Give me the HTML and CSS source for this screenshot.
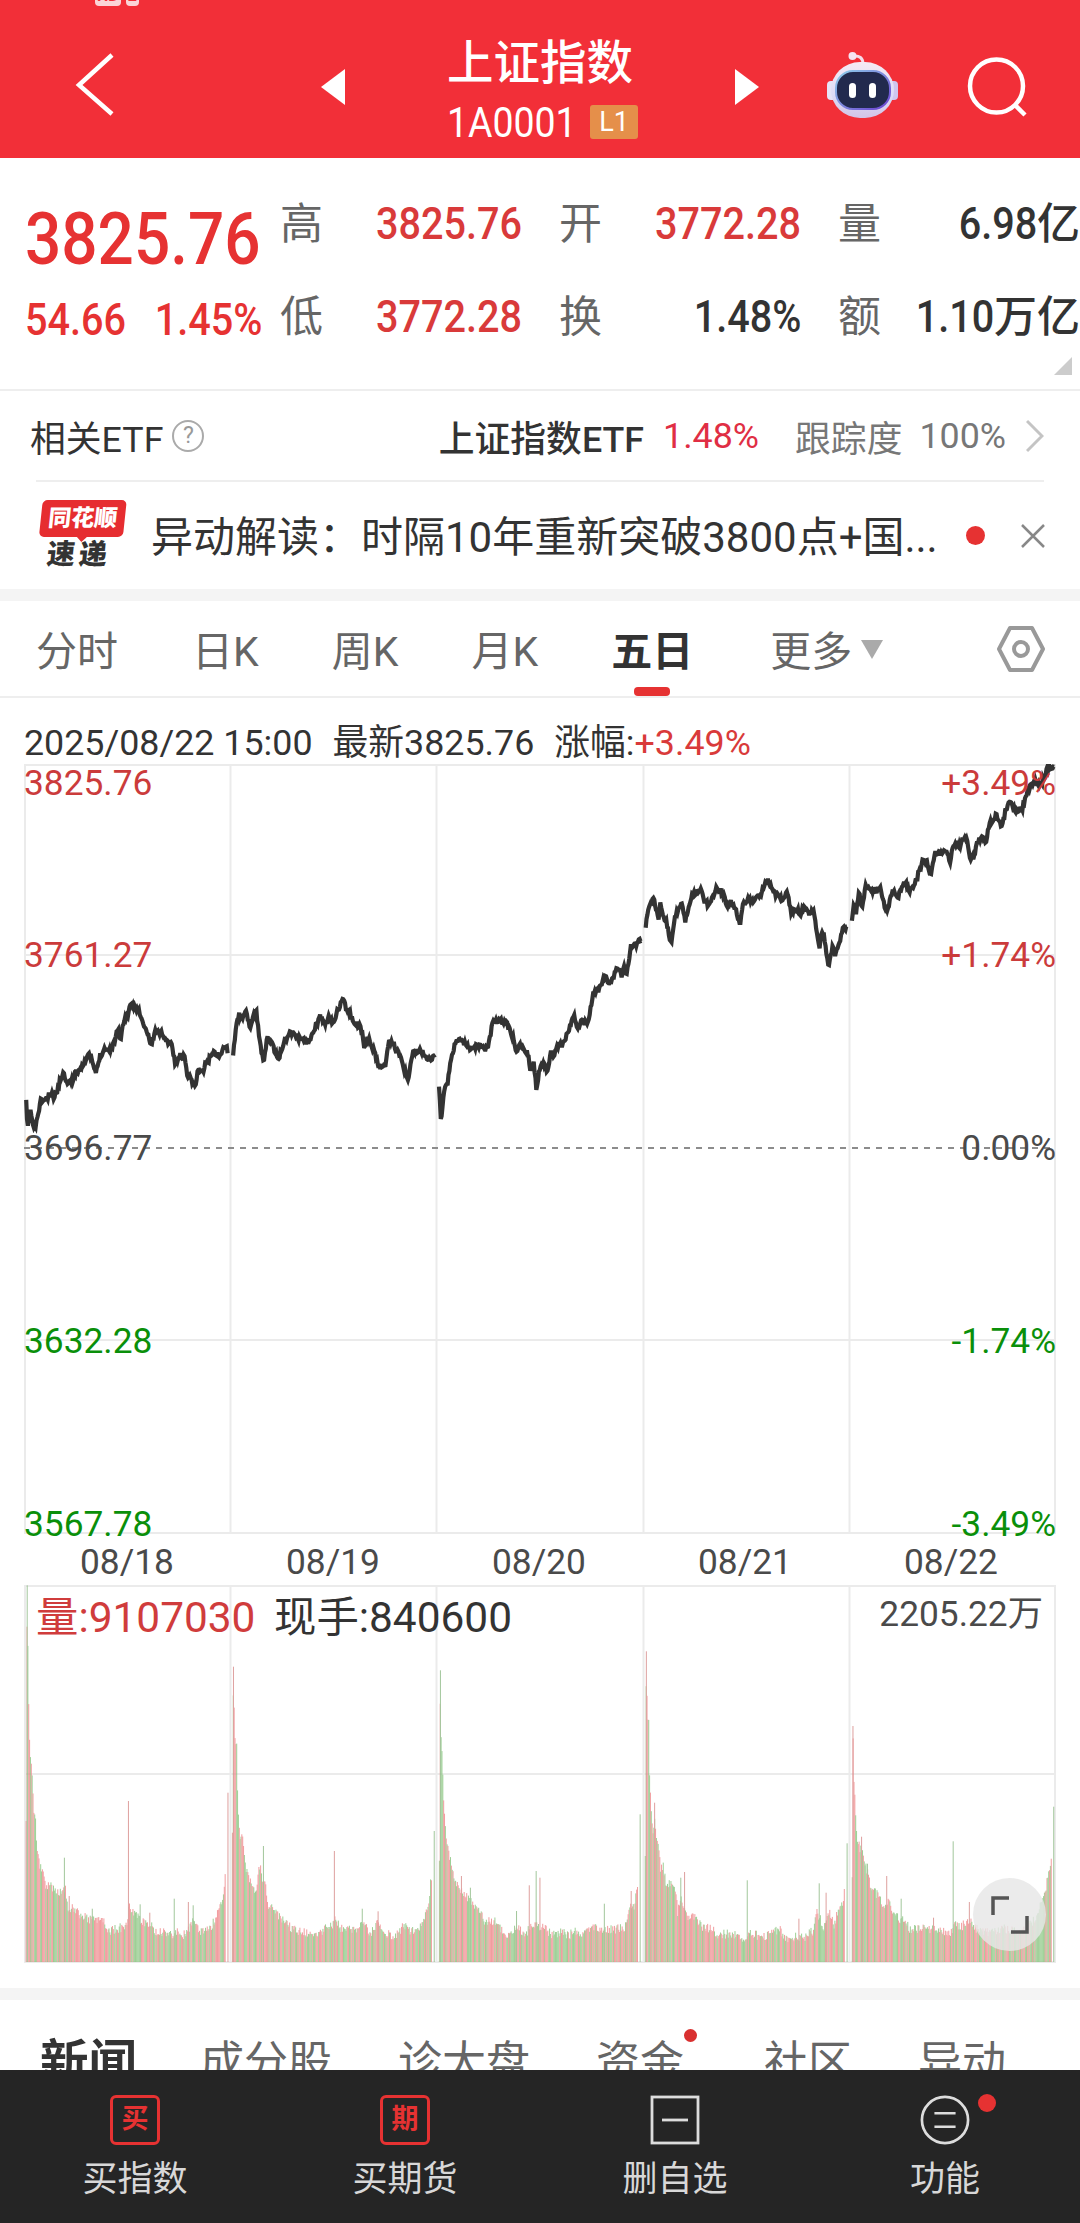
FILE: index.html
```html
<!DOCTYPE html>
<html lang="zh-CN">
<head>
    <meta charset="UTF-8">
    <meta name="viewport" content="width=device-width, initial-scale=1.0">
    <title>上证指数</title>
    <link rel="stylesheet" href="styles.css">
</head>
<body>
    <!-- Header -->
    <header class="header">
        <div class="status"><span>HD</span><span class="sim">2</span></div>
        <svg class="back" width="50" height="70" viewBox="0 0 50 70"><path d="M42 5 L9 35 L42 64" fill="none" stroke="#fff" stroke-width="4.5"/></svg>
        <svg class="prev" width="24" height="36" viewBox="0 0 24 36"><path d="M24 0 V36 L0 18 Z" fill="#fff"/></svg>
        <div class="title">
            <h1>上证指数</h1>
            <div class="code"><span class="code-num">1A0001</span><span class="level">L1</span></div>
        </div>
        <svg class="next" width="24" height="36" viewBox="0 0 24 36"><path d="M0 0 V36 L24 18 Z" fill="#fff"/></svg>
        <svg class="robot" width="74" height="68" viewBox="0 0 74 68">
            <defs>
                <linearGradient id="shell" x1="0" y1="0" x2="0" y2="1">
                    <stop offset="0" stop-color="#f6e9f4"/><stop offset=".6" stop-color="#dcdcf6"/><stop offset="1" stop-color="#d3c3e6"/>
                </linearGradient>
                <linearGradient id="rim" x1="0" y1="0" x2="1" y2="1">
                    <stop offset="0" stop-color="#8fd0ea"/><stop offset="1" stop-color="#6a3fd0"/>
                </linearGradient>
            </defs>
            <path d="M27 5 Q37 4 37 13" fill="none" stroke="#f6dcea" stroke-width="3"/>
            <circle cx="26.500" cy="5" r="4" fill="#f6e4f2"/>
            <rect x="1" y="30" width="10" height="19" rx="4" fill="#e6e4f6"/>
            <rect x="62" y="30" width="10" height="19" rx="4" fill="#cfc6ee"/>
            <rect x="5" y="11" width="63" height="56" rx="29" fill="url(#shell)"/>
            <rect x="10" y="20" width="54" height="38" rx="17" fill="#222a4e" stroke="url(#rim)" stroke-width="2"/>
            <rect x="23" y="32" width="7" height="15" rx="3.500" fill="#fff"/>
            <rect x="43" y="32" width="7" height="15" rx="3.500" fill="#fff"/>
        </svg>
        <svg class="search" width="62" height="62" viewBox="0 0 62 62" fill="none" stroke="#fff" stroke-width="4.500"><circle cx="29.500" cy="30" r="26.500"/><path d="M47 48 L58 59"/></svg>
    </header>

    <!-- Quote -->
    <section class="quote">
        <div class="last">
            <div class="price"><span>3825.76</span></div>
            <div class="change"><span class="num">54.66</span><span class="num">1.45%</span></div>
        </div>
        <dl class="stats">
            <div><dt>高</dt><dd class="red"><span class="num">3825.76</span></dd></div>
            <div><dt>开</dt><dd class="red"><span class="num">3772.28</span></dd></div>
            <div><dt>量</dt><dd><span class="num">6.98</span>亿</dd></div>
            <div><dt>低</dt><dd class="red"><span class="num">3772.28</span></dd></div>
            <div><dt>换</dt><dd><span class="num">1.48%</span></dd></div>
            <div><dt>额</dt><dd><span class="num">1.10</span>万亿</dd></div>
        </dl>
        <span class="corner"></span>
    </section>

    <section class="etf">
        <span>相关ETF</span>
        <span class="help">?</span>
        <span class="etf-name">上证指数ETF</span>
        <span class="etf-rate">1.48%</span>
        <span class="grey">跟踪度</span>
        <span class="grey track">100%</span>
        <svg width="18" height="34" viewBox="0 0 18 34"><path d="M1 2 L16 17 L1 32" fill="none" stroke="#c4c4c4" stroke-width="3"/></svg>
    </section>

    <section class="news">
        <div class="brand">
            <div class="brand-top">同花顺</div>
            <div class="brand-bottom">速递</div>
        </div>
        <p>异动解读：时隔10年重新突破3800点+国...</p>
        <i class="dot"></i>
        <svg width="24" height="24" viewBox="0 0 24 24"><path d="M1 1 L23 23 M23 1 L1 23" stroke="#888" stroke-width="2.500"/></svg>
    </section>

    <!-- Chart period -->
    <nav class="periods">
        <a>分时</a><a>日K</a><a>周K</a><a>月K</a><a class="active">五日</a><a>更多<i class="caret"></i></a>
        <svg width="50" height="48" viewBox="0 0 50 48" fill="none" stroke="#999" stroke-width="4"><path d="M14 3 H36 L47 24 L36 45 H14 L3 24 Z" stroke-linejoin="round"/><circle cx="25" cy="24" r="7"/></svg>
    </nav>

    <section class="chart">
        <div class="legend"><span>2025/08/22 15:00</span><span>最新3825.76</span><span>涨幅:<b class="red">+3.49%</b></span></div>
        <svg class="price-chart" width="1032" height="773" viewBox="0 0 1032 773">
            <g class="grid">
                <path d="M0 1 H1031 M0 191 H1031 M0 576 H1031 M0 769 H1031"/>
                <path d="M1 0 V770 M206.500 0 V770 M412.500 0 V770 M619.500 0 V770 M825.500 0 V770 M1031 0 V770"/>
            </g>
            <path class="zero" d="M0 384 H1031"/>
            <g id="lines"></g>
            <g class="axis">
                <text class="up" x="0" y="31">3825.76</text>
                <text class="up" x="0" y="203">3761.27</text>
                <text x="0" y="396">3696.77</text>
                <text class="down" x="0" y="589">3632.28</text>
                <text class="down" x="0" y="772">3567.78</text>
            </g>
            <g class="axis right">
                <text class="up" x="1032" y="31">+3.49%</text>
                <text class="up" x="1032" y="203">+1.74%</text>
                <text x="1032" y="396">0.00%</text>
                <text class="down" x="1032" y="589">-1.74%</text>
                <text class="down" x="1032" y="772">-3.49%</text>
            </g>
        </svg>
        <div class="dates"><span>08/18</span><span>08/19</span><span>08/20</span><span>08/21</span><span>08/22</span></div>
        <svg class="volume-chart" width="1032" height="379" viewBox="0 0 1032 379">
            <g class="grid">
                <path d="M0 1 H1031 M0 189 H1031 M0 377 H1031"/>
                <path d="M1 0 V378 M206.500 0 V378 M412.500 0 V378 M619.500 0 V378 M825.500 0 V378 M1031 0 V378"/>
            </g>
            <g id="bars"></g>
            <text class="vol red-fill" x="12" y="47">量:9107030</text>
            <text class="vol" x="250" y="47">现手:840600</text>
            <text class="max" x="1019" y="41">2205.22万</text>
        </svg>
        <div class="expand">
            <svg width="38" height="38" viewBox="0 0 38 38" fill="none" stroke="#555" stroke-width="3.500"><path d="M2 19 V2 H18 M36 20 V36 H20"/></svg>
        </div>
    </section>

    <nav class="topics">
        <a class="active">新闻</a><a>成分股</a><a>诊大盘</a><a class="has-dot">资金</a><a>社区</a><a>异动</a>
    </nav>

    <!-- Bottom bar -->
    <footer class="toolbar">
        <div class="tool"><span class="box">买</span>买指数</div>
        <div class="tool"><span class="box">期</span>买期货</div>
        <div class="tool">
            <svg width="50" height="50" viewBox="0 0 50 50" fill="none" stroke="#ddd" stroke-width="2.800"><rect x="2" y="2" width="46" height="46"/><path d="M12 25 H38"/></svg>
            删自选
        </div>
        <div class="tool more">
            <svg width="52" height="52" viewBox="0 0 52 52" fill="none" stroke="#ddd" stroke-width="2.800"><circle cx="26" cy="26" r="24"/><path d="M15 19 H37 M15 33 H37"/></svg>
            功能
        </div>
    </footer>

    <script>
        // x and y are in plot units, about three to a pixel
        var UX = 2.904;
        var prices = [
            '76,1210 80,1290 88,1230 98,1290 104,1280 118,1205 135,1200 148,1185 158,1195 170,1160 182,1120 195,1145 208,1148 220,1120 235,1105 245,1085 262,1065 278,1125 290,1070 305,1045 315,1055 330,1035 342,985 350,1025 360,960 370,950 378,925 385,918 402,930 412,965 425,995 440,1038 450,998 472,1000 480,1025 498,1030 508,1092 522,1070 535,1070 545,1130 555,1135 565,1165 577,1105 588,1120 598,1090 606,1085 615,1058 640,1070 657,1032 663,1065',
            '677,1062 688,960 695,945 700,960 712,932 726,988 738,945 745,940 755,1030 766,1092 775,1015 790,1035 808,1082 822,1035 840,1000 852,998 865,1020 878,1015 895,1033 908,1000 930,952 945,975 955,955 968,975 980,930 996,905 1010,935 1030,970 1048,985 1058,1040 1068,1015 1085,1050 1100,1100 1118,1105 1130,1018 1150,1050 1165,1075 1185,1150 1198,1058 1225,1055 1245,1078 1265,1070',
            '1275,1170 1281,1268 1288,1180 1300,1150 1306,1100 1320,1035 1335,1020 1350,1035 1368,1050 1395,1035 1412,1048 1420,1030 1432,962 1470,968 1485,1000 1502,1062 1510,1035 1532,1060 1540,1110 1550,1090 1558,1175 1566,1110 1573,1090 1590,1112 1600,1055 1608,1070 1623,1030 1636,1035 1648,1000 1666,950 1678,985 1690,960 1705,978 1716,920 1726,875 1738,875 1756,832 1773,855 1793,800 1805,830 1813,805 1820,820 1833,740 1846,740 1858,718 1863,722',
            '1875,685 1884,620 1898,600 1913,660 1918,610 1926,655 1933,660 1949,735 1958,665 1966,640 1978,608 1990,670 2008,590 2036,570 2043,600 2055,615 2068,600 2080,568 2090,570 2103,590 2113,625 2123,605 2138,635 2148,678 2158,605 2188,600 2208,590 2218,560 2230,538 2240,560 2253,585 2273,600 2286,580 2298,640 2318,630 2325,650 2333,625 2348,645 2363,630 2370,690 2380,745 2386,705 2393,700 2400,770 2408,798 2418,740 2426,770 2438,725 2448,690 2461,685',
            '2474,670 2478,620 2486,635 2495,582 2503,630 2513,560 2528,575 2543,575 2556,565 2563,605 2576,635 2593,575 2608,590 2628,545 2640,575 2656,560 2668,520 2680,485 2693,490 2703,522 2716,460 2733,460 2748,455 2759,490 2768,440 2783,440 2806,415 2818,488 2830,465 2838,425 2853,412 2863,428 2873,375 2893,345 2910,385 2920,330 2933,310 2953,335 2968,330 2983,280 3008,240 3020,260 3030,240 3043,205 3063,203'
        ];
        var volumes = [
            '76,1025 79,320 82,595 85,760 88,830 92,862 95,920 98,1000 103,1010 106,1090 112,1150 125,1185 132,1225 150,1225 160,1235 175,1245 190,1235 198,1290 215,1290 230,1310 255,1320 270,1325 300,1330 318,1360 340,1350 370,1345 375,1245 377,1290 395,1310 420,1335 440,1335 452,1362 480,1362 500,1370 520,1355 530,1375 545,1355 560,1330 580,1362 600,1355 615,1340 630,1305 645,1275 650,1240 655,1180',
            '675,1060 678,562 681,750 684,805 687,770 690,940 692,1000 697,1080 704,1060 708,1120 712,1165 722,1200 735,1235 745,1250 752,1160 757,1160 760,1200 770,1210 778,1285 795,1295 815,1320 840,1345 865,1358 900,1365 930,1360 950,1345 968,1335 975,1310 985,1350 1010,1350 1040,1350 1060,1335 1075,1370 1095,1330 1110,1365 1150,1372 1175,1340 1195,1358 1220,1350 1235,1310 1245,1270 1253,1190',
            '1276,1150 1279,573 1282,880 1284,790 1287,940 1290,990 1296,1080 1303,1125 1315,1180 1330,1225 1350,1245 1370,1275 1390,1300 1410,1330 1435,1325 1455,1355 1480,1370 1500,1340 1520,1370 1550,1340 1562,1340 1578,1350 1608,1370 1638,1360 1653,1375 1668,1350 1686,1380 1713,1350 1748,1350 1778,1355 1818,1345 1830,1290 1843,1280 1853,1200',
            '1874,1120 1877,516 1880,720 1884,722 1885,860 1888,920 1892,1010 1897,1070 1901,1015 1906,1075 1913,1100 1918,1170 1926,1160 1933,1210 1953,1220 1963,1230 1968,1305 1976,1260 1983,1280 1996,1325 2018,1315 2038,1345 2063,1350 2088,1370 2118,1365 2143,1370 2166,1385 2173,1355 2208,1378 2248,1360 2268,1355 2280,1380 2308,1375 2338,1375 2363,1355 2373,1300 2393,1350 2408,1295 2423,1340 2433,1300 2448,1270 2453,1215',
            '2475,1200 2477,740 2479,895 2482,935 2485,1010 2489,1085 2498,1110 2506,1110 2513,1160 2523,1200 2533,1235 2553,1255 2568,1285 2578,1270 2598,1310 2628,1330 2643,1355 2668,1350 2698,1350 2728,1355 2760,1370 2773,1330 2788,1345 2818,1330 2843,1360 2868,1360 2913,1350 2948,1360 2978,1350 3008,1320 3033,1250 3046,1180 3053,1135'
        ];
        var spikes = '79,318 678,562 187,1135 201,1250 268,1288 373,965 407,1275 435,1300 506,1258 547,1268 561,1278 662,940 765,1100 971,1115 1052,1288 1098,1296 1279,573 1877,516 1261,1055 1340,1190 1366,1225 2477,740 1500,1295 1537,1218 1557,1175 1568,1195 1755,1273 1833,1235 1859,1005 1901,970 1977,1195 1988,1178 2170,1203 2320,1318 2379,1212 2399,1240 2460,1092 2502,1072 2519,1153 2575,1190 2617,1258 2711,1315 2768,1086 2815,1268 3060,982';

        var seed = 11;
        function rnd() {
            seed = (seed * 16807) % 2147483647;
            return seed / 2147483647;
        }

        function parse(s) {
            return s.split(' ').map(function(p) {
                return p.split(',').map(Number);
            });
        }

        // fill in the minutes between the given points
        function minutes(s, step, noise) {
            var pts = parse(s), out = [], i = 0;
            for (var x = pts[0][0]; x <= pts[pts.length - 1][0]; x += step) {
                while (i < pts.length - 2 && pts[i + 1][0] < x) i++;
                var a = pts[i], b = pts[i + 1];
                var y = a[1] + (b[1] - a[1]) * (x - a[0]) / (b[0] - a[0]);
                out.push([x, y + (rnd() - 0.5) * noise]);
            }
            return out;
        }

        var lines = '';
        prices.forEach(function(day) {
            var d = minutes(day, 2.5, 17).map(function(p) {
                return (p[0] / UX - 24).toFixed(1) + ' ' + Math.max(2, (p[1] - 200) / 3 + 2).toFixed(1);
            });
            lines += '<path d="M' + d.join(' L') + '"/>';
        });
        document.getElementById('lines').innerHTML = lines;

        function bar(x, y, color) {
            return '<rect x="' + (x / UX - 24.5).toFixed(2) + '" y="' + ((y - 317) / 3).toFixed(1) +
                '" width="1" height="' + ((1448 - y) / 3).toFixed(1) + '" fill="' + color + '"/>';
        }

        var bars = '';
        volumes.forEach(function(day) {
            minutes(day, 2.48, 0).forEach(function(p) {
                var y = p[1];
                if (y > 1100) y += (rnd() - 0.6) * 28;
                bars += bar(p[0], y, rnd() > 0.5 ? '#ef8588' : '#86c47c');
            });
        });
        parse(spikes).forEach(function(p, i) {
            bars += bar(p[0], p[1], i % 2 ? '#d78a88' : '#8cba84');
        });
        document.getElementById('bars').innerHTML = bars;
    </script>
</body>
</html>
```

FILE: styles.css
```css
* {
    box-sizing: border-box;
}

body {
    margin: 0;
    width: 1080px;
    height: 2223px;
    overflow: hidden;
    background: #fff;
    color: #333;
    font-family: Roboto, "Noto Sans CJK SC", sans-serif;
    font-size: 36px;
    display: flex;
    flex-direction: column;
}

h1, p, dl, dt, dd {
    margin: 0;
    font-weight: normal;
}

svg {
    display: block;
    flex: none;
}

.red {
    color: #d93a3a;
    font-weight: normal;
}

.grey {
    color: #777;
}

/* header */
.header {
    position: relative;
    flex: none;
    height: 158px;
    padding: 12px 51px 0 70px;
    display: flex;
    align-items: center;
    background: #f22f38;
    color: #fff;
}

.status {
    position: absolute;
    left: 95px;
    top: -14px;
    display: flex;
    gap: 5px;
    font-size: 16px;
    line-height: 20px;
    font-weight: bold;
    color: #f22f38;
}

.status span {
    padding: 0 2px;
    background: #fbd5d7;
    border-radius: 4px;
}

.prev {
    margin: 4px 0 0 201px;
}

.title {
    width: 194px;
    margin: 10px 0 0 102px;
}

.title h1 {
    font-size: 46.500px;
    line-height: 56px;
    font-weight: 500;
    white-space: nowrap;
}

.code {
    display: flex;
    align-items: center;
    height: 46px;
    margin-top: 8px;
}

.code-num {
    width: 143px;
    font-size: 43px;
    transform: scaleX(.87);
    transform-origin: left;
}

.level {
    width: 48px;
    height: 34px;
    border-radius: 3px;
    background: #e58f4a;
    font-size: 27px;
    line-height: 34px;
    text-align: center;
}

.next {
    margin: 4px 0 0 94px;
}

.robot {
    margin-left: 67px;
}

.search {
    margin: 4px 0 0 67px;
}

/* quote */
.quote {
    position: relative;
    flex: none;
    height: 233px;
    padding-top: 36px;
    display: flex;
    border-bottom: 2px solid #eee;
}

.last {
    width: 280px;
    padding-left: 25px;
    color: #e63232;
}

.price {
    height: 88px;
    font-size: 73px;
    line-height: 90px;
    font-weight: 500;
}

.price span {
    display: inline-block;
    transform: scaleX(.875);
    transform-origin: left;
}

.change {
    display: flex;
    justify-content: space-between;
    width: 234px;
    line-height: 71px;
    margin-top: 2px;
}

.change .num:first-child {
    transform-origin: left;
}

.num {
    display: inline-block;
    font-size: 45px;
    font-weight: 500;
    transform: scaleX(.88);
    transform-origin: right;
}

.stats {
    display: grid;
    grid-template-columns: 242px 242px 242px;
    column-gap: 37px;
    grid-auto-rows: 93px;
}

.stats div {
    display: flex;
    justify-content: space-between;
    line-height: 60px;
}

.stats dt {
    font-size: 43px;
    color: #666;
}

.stats dd {
    font-size: 43px;
    font-weight: 500;
    white-space: nowrap;
}

.corner {
    position: absolute;
    right: 8px;
    bottom: 14px;
    border-left: 18px solid transparent;
    border-bottom: 18px solid #ccc;
}

/* related etf */
.etf {
    flex: none;
    height: 91px;
    margin: 0 36px;
    display: flex;
    align-items: center;
    border-bottom: 2px solid #eee;
    font-size: 35.800px;
    white-space: nowrap;
}

.etf span:first-child {
    margin-left: -6px;
}

.help {
    width: 32px;
    height: 32px;
    margin-left: 9px;
    border: 2px solid #aaa;
    border-radius: 50%;
    font-size: 23px;
    line-height: 28px;
    text-align: center;
    color: #999;
}

.etf-name {
    margin-left: auto;
    font-weight: 500;
}

.etf-rate {
    margin-left: 19px;
    color: #e02e44;
}

.track {
    margin-left: 17px;
}

.etf-rate + .grey {
    margin-left: 36px;
}

.etf svg {
    margin: 0 0 0 20px;
}

/* news */
.news {
    flex: none;
    height: 107px;
    padding: 0 35px 0 36px;
    display: flex;
    align-items: center;
}

.brand {
    width: 84px;
    margin: 0 28px 0 3px;
    text-align: center;
    font-weight: 900;
    transform: skewX(-6deg);
}

.brand-top {
    position: relative;
    height: 37px;
    border-radius: 5px;
    background: #e62d30;
    color: #fff;
    font-size: 23px;
    line-height: 37px;
}

.brand-top::after {
    content: "";
    position: absolute;
    left: 37px;
    top: 36px;
    border: 6px solid transparent;
    border-top-color: #e62d30;
}

.brand-bottom {
    font-size: 28px;
    line-height: 35px;
    letter-spacing: 4px;
}

.news p {
    width: 790px;
    margin-top: -4px;
    font-size: 42px;
    white-space: nowrap;
}

.dot {
    width: 19px;
    height: 19px;
    margin-left: 25px;
    border-radius: 50%;
    background: #e63232;
}

.news svg {
    margin-left: auto;
}

/* chart period tabs */
.periods {
    flex: none;
    height: 109px;
    padding: 0 34px 0 36px;
    display: flex;
    align-items: center;
    border-top: 12px solid #f4f4f4;
    border-bottom: 2px solid #eee;
    font-size: 41px;
    color: #666;
}

.periods a {
    position: relative;
    margin: -2px 74px 0 0;
    white-space: nowrap;
}

.periods a:nth-child(n+2) {
    margin-right: 73px;
}

.periods a.active {
    margin-right: 77px;
    color: #333;
    font-weight: bold;
}

.periods .active::after {
    content: "";
    position: absolute;
    left: 23px;
    bottom: -18px;
    width: 36px;
    height: 9px;
    border-radius: 4px;
    background: #e63232;
}

.periods svg {
    margin-left: auto;
}

.caret {
    display: inline-block;
    margin-left: 9px;
    vertical-align: 7px;
    border: 11px solid transparent;
    border-top: 19px solid #aaa;
    border-bottom: 0;
}

/* charts */
.chart {
    position: relative;
    flex: none;
    height: 1290px;
    padding: 19px 24px 0;
    font-size: 35.300px;
}

.legend {
    display: flex;
    gap: 20px;
    height: 47px;
    font-size: 35.800px;
    line-height: 52px;
    white-space: nowrap;
}

.grid path {
    fill: none;
    stroke: #ebebeb;
    stroke-width: 2;
}

.zero {
    stroke: #8c8c8c;
    stroke-width: 2;
    stroke-dasharray: 6 6;
}

#lines path {
    fill: none;
    stroke: #333;
    stroke-width: 4.200;
}

#bars {
    opacity: .8;
}

.axis text {
    fill: #4a4a4a;
}

.axis .up {
    fill: #cb3b3b;
}

.axis .down {
    fill: #0a8f0a;
}

.right,
.max {
    text-anchor: end;
}

.dates {
    display: grid;
    grid-template-columns: repeat(5, 206px);
    height: 47px;
    line-height: 50px;
    text-align: center;
    color: #4a4a4a;
}

.volume-chart {
    margin-top: 1px;
}

.vol {
    font-size: 42.400px;
    fill: #333;
}

.red-fill {
    fill: #d03c3c;
}

.max {
    fill: #4a4a4a;
}

.expand {
    position: absolute;
    left: 973px;
    bottom: 37px;
    width: 73px;
    height: 73px;
    display: flex;
    align-items: center;
    justify-content: center;
    border-radius: 50%;
    background: rgba(230, 230, 230, .82);
}

/* topic tabs */
.topics {
    flex: none;
    height: 82px;
    padding: 30px 0 0 40px;
    display: flex;
    border-top: 12px solid #f4f4f4;
    overflow: hidden;
    font-size: 44px;
    line-height: 67px;
    color: #666;
    white-space: nowrap;
}

.topics a {
    position: relative;
    margin-right: 66px;
}

.topics .active {
    margin-right: 63px;
    font-size: 48.500px;
    font-weight: bold;
    color: #333;
}

.topics .has-dot {
    margin-right: 80px;
}

.has-dot::after {
    content: "";
    position: absolute;
    right: -13px;
    top: -1px;
    width: 13px;
    height: 13px;
    border-radius: 50%;
    background: #d93030;
}

/* bottom bar */
.toolbar {
    flex: none;
    height: 153px;
    display: grid;
    grid-template-columns: repeat(4, 1fr);
    background: #252525;
    color: #d8d8d8;
}

.tool {
    position: relative;
    display: flex;
    flex-direction: column;
    align-items: center;
    padding-top: 25px;
    font-size: 35px;
    line-height: 52px;
}

.tool svg,
.tool .box {
    height: 50px;
    margin-bottom: 9px;
}

.box {
    width: 50px;
    border: 3px solid #e63232;
    border-radius: 6px;
    font-size: 27px;
    line-height: 42px;
    font-weight: bold;
    text-align: center;
    color: #e63232;
}

.more::after {
    content: "";
    position: absolute;
    left: 168px;
    top: 24px;
    width: 18px;
    height: 18px;
    border-radius: 50%;
    background: #e63232;
}
```
